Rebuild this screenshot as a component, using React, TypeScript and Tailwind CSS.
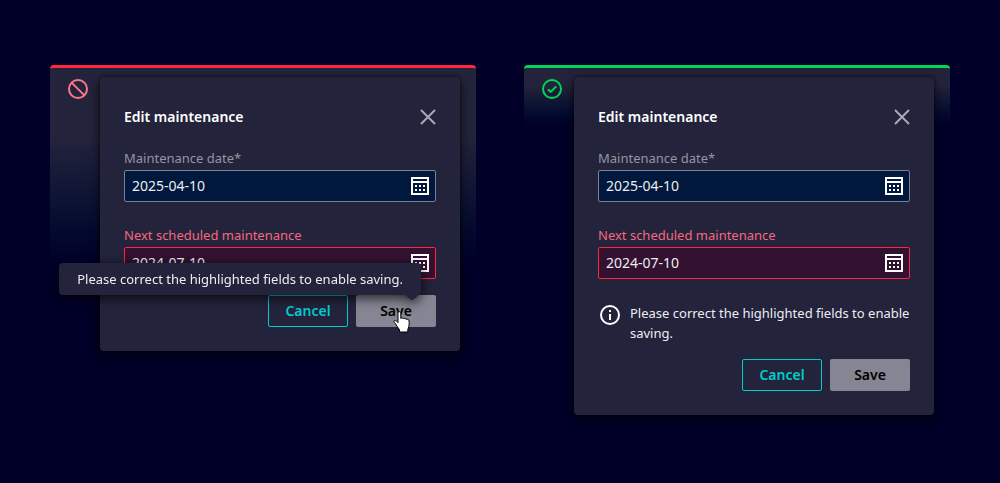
import React from 'react';

interface PanelProps {
  id: string;
  variant: 'dont' | 'do';
}

const ForbiddenIcon = () => (
  <svg className="size-5 shrink-0" viewBox="0 0 20 20" fill="none" stroke="#ff7687" strokeWidth="2" aria-hidden="true">
    <circle cx="10" cy="10" r="9" />
    <path d="M3.6 3.6l12.8 12.8" />
  </svg>
);

const CheckIcon = () => (
  <svg className="size-5 shrink-0" viewBox="0 0 20 20" fill="none" stroke="#01d65a" strokeWidth="2" aria-hidden="true">
    <circle cx="10" cy="10" r="9" />
    <path d="M6 10.2l2.7 2.7L14.2 7.4" />
  </svg>
);

const CalendarIcon = () => (
  <svg className="size-[18px]" viewBox="0 0 18 18" fill="#fff" aria-hidden="true">
    <path fillRule="evenodd" d="M0 0h18v18H0zM2 2v2h14V2zM2 6v10h14V6z" />
    <path d="M4 8h2v2H4zM8 8h2v2H8zM12 8h2v2h-2zM4 12h2v2H4zM8 12h2v2H8zM12 12h2v2h-2z" />
  </svg>
);

const CloseIcon = () => (
  <svg className="size-4" viewBox="0 0 16 16" fill="none" stroke="#a9a9b4" strokeWidth="2" aria-hidden="true">
    <path d="M1 1l14 14M15 1L1 15" />
  </svg>
);

const InfoIcon = () => (
  <svg className="size-6 shrink-0" viewBox="0 0 24 24" fill="none" stroke="#fff" strokeWidth="2" aria-hidden="true">
    <circle cx="12" cy="12" r="9" />
    <path d="M12 11v6M12 7v2" />
  </svg>
);

const HandCursor = () => (
  <svg
    className="pointer-events-none absolute top-4 left-[37px] h-[22px] w-[18px]"
    viewBox="0 0 18 22"
    aria-hidden="true"
  >
    <path
      d="M5 2.2C5 1.2 5.7.7 6.4.7S7.8 1.2 7.8 2.2V7.5c.4-.8 2.3-.8 2.7.3.5-.7 2.2-.5 2.6.6.7-.6 2.6-.2 2.9 1.3.3 2.3.2 5.3-.7 7.3l-.5 1.5V21H6.6v-2.2C5 17 3.6 14.7 2.6 12.8c-.7-1-1.8-1.7-1.6-2.5.3-1 1.6-1 2.6-.1L5 11.6z"
      fill="#fff"
      stroke="#000"
      strokeWidth="1"
      strokeLinejoin="round"
    />
  </svg>
);

interface DateFieldProps {
  id: string;
  label: string;
  value: string;
  invalid?: boolean;
}

const DateField = ({ id, label, value, invalid }: DateFieldProps) => (
  <div className="flex flex-col gap-0.5">
    <label htmlFor={id} className={`text-[13px] leading-5 ${invalid ? 'text-[#f4697e]' : 'text-[#9595a3]'}`}>
      {label}
    </label>
    <div
      className={`flex h-8 items-center rounded-xs border pr-1.5 pl-[7px] ${
        invalid ? 'border-[#ff2640] bg-[#331131]' : 'border-[#7d8099] bg-[#00183b]'
      }`}
    >
      <input
        id={id}
        type="text"
        defaultValue={value}
        aria-invalid={invalid}
        className="min-w-0 flex-1 bg-transparent text-sm leading-5 text-[#ededf2] outline-none"
      />
      <button type="button" aria-label="Open calendar">
        <CalendarIcon />
      </button>
    </div>
  </div>
);

const message = 'Please correct the highlighted fields to enable saving.';

const Panel = ({ id, variant }: PanelProps) => {
  const isDont = variant === 'dont';

  return (
    <section
      className={`flex items-start gap-3 rounded-t-sm border-t-3 bg-no-repeat pt-[9px] pr-4 pl-[18px] ${
        isDont
          ? 'border-[#ff2640] bg-linear-to-b from-[#23233c] from-25% to-[#000028] to-72%'
          : 'border-[#01d65a] bg-linear-to-b from-[#23233c] from-5% to-[#000028] to-17%'
      }`}
    >
      <div className="pt-0.5">{isDont ? <ForbiddenIcon /> : <CheckIcon />}</div>
      <div
        role="dialog"
        aria-labelledby={`${id}-title`}
        className="min-w-0 flex-1 rounded-sm bg-[#23233c] p-6 shadow-[0_4px_12px_rgba(0,0,0,0.7),0_0_3px_rgba(0,0,0,0.7)]"
      >
        <div className="mb-[15px] flex h-8 items-center justify-between">
          <h2 id={`${id}-title`} className="text-sm leading-5 font-semibold text-white">
            Edit maintenance
          </h2>
          <button type="button" aria-label="Close">
            <CloseIcon />
          </button>
        </div>
        <div className="flex flex-col gap-[23px]">
          <DateField id={`${id}-date`} label="Maintenance date*" value="2025-04-10" />
          <DateField id={`${id}-next`} label="Next scheduled maintenance" value="2024-07-10" invalid />
        </div>
        {!isDont && (
          <div className="mt-6 flex items-start gap-2">
            <InfoIcon />
            <p className="text-[13px] leading-5 text-[#ededf2]">{message}</p>
          </div>
        )}
        <div className="mt-4 flex justify-end gap-2">
          <button
            type="button"
            className="h-8 w-20 rounded-xs border border-[#00cccc] text-sm font-semibold text-[#00cccc]"
          >
            Cancel
          </button>
          <div className="relative">
            <button
              type="button"
              aria-disabled="true"
              className="h-8 w-20 rounded-xs bg-[#868593] text-sm font-semibold text-black"
            >
              Save
            </button>
            {isDont && (
              <>
                <div
                  role="tooltip"
                  className="absolute right-[15px] bottom-full rounded-sm bg-[#23233c] px-[18px] py-1.5 text-[13px] leading-5 whitespace-nowrap text-[#ededf2] drop-shadow-[0_3px_6px_rgba(0,0,0,0.75)]"
                >
                  {message}
                  <svg className="absolute top-full right-0.5 h-[5px] w-3.5" viewBox="0 0 14 5" fill="#23233c">
                    <path d="M0 0h14L8.5 4.5Q7 5.5 5.5 4.5z" />
                  </svg>
                </div>
                <HandCursor />
              </>
            )}
          </div>
        </div>
      </div>
    </section>
  );
};

const App = () => (
  <main className="min-h-screen bg-[#000028] px-[50px] pt-[65px] pb-12 font-['Noto_Sans',sans-serif]">
    <div className="grid grid-cols-2 items-start gap-12">
      <Panel id="tooltip" variant="dont" />
      <Panel id="inline" variant="do" />
    </div>
  </main>
);

export default App;
